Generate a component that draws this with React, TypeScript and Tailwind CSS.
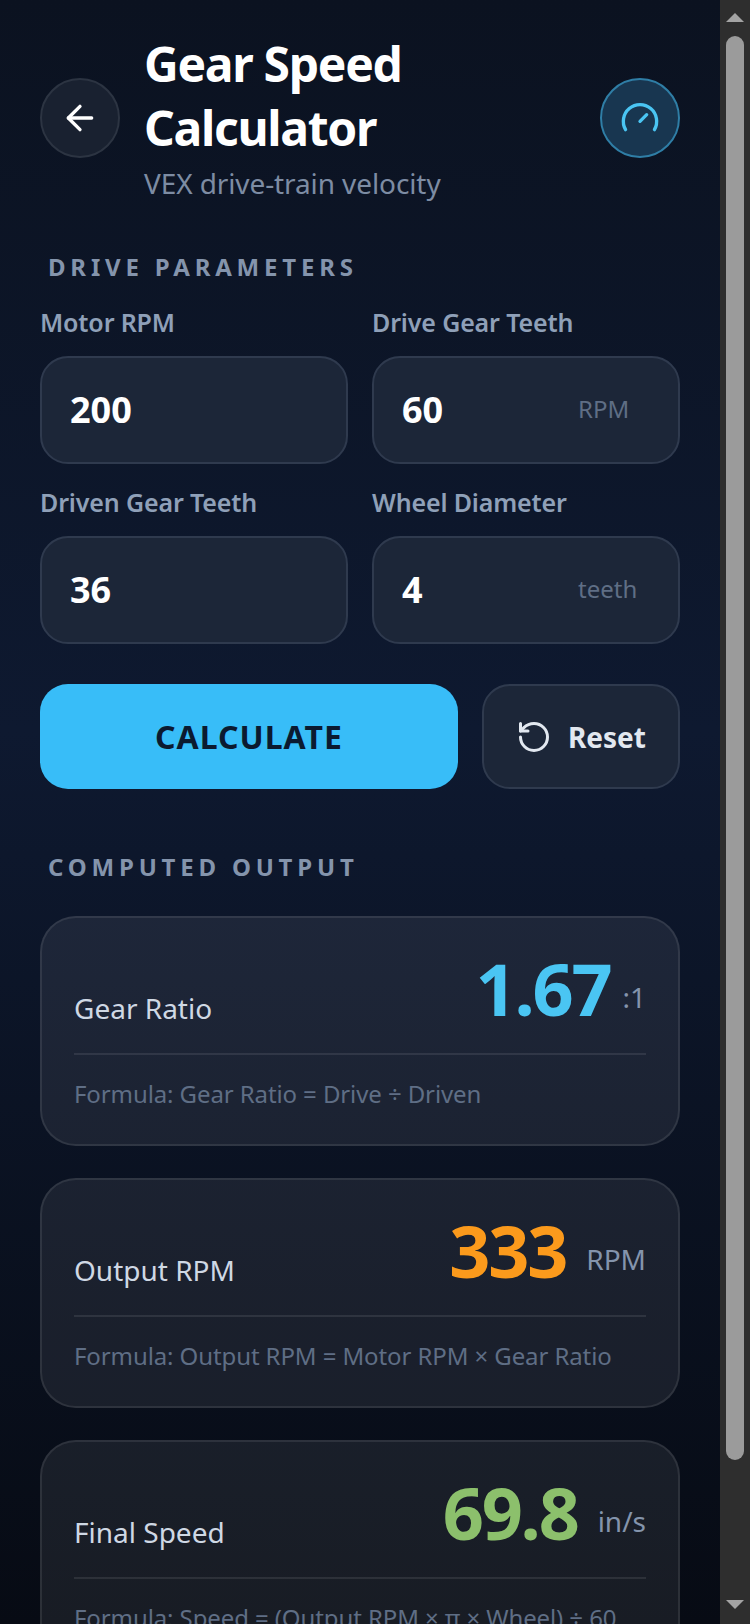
import { ArrowLeft, Gauge, RotateCcw } from "lucide-react";

const Field = ({ label, value, unit }: { label: string; value: string; unit?: string }) => (
  <div className="flex flex-col">
    <label className="text-[25px] leading-[32px] font-semibold tracking-[-0.15px] text-[#8fa0b8] mb-[18px]">{label}</label>
    <div className="h-[108px] rounded-[28px] border-2 border-[#2f3a4e] bg-[#1c2638] flex items-center justify-between pl-[28px] pr-[42px]">
      <span className="text-[36px] font-bold text-white">{value}</span>
      {unit && <span className="w-[58px] -mt-[2px] text-[24px] text-[#5f6e85]">{unit}</span>}
    </div>
  </div>
);

const ResultCard = ({
  label,
  value,
  unit,
  formula,
  valueClass,
  unitClass,
}: {
  label: string;
  value: string;
  unit: string;
  formula: string;
  valueClass: string;
  unitClass: string;
}) => (
  <div className="h-[230px] shrink-0 rounded-[36px] border-2 border-white/[.09] bg-white/[.07] px-[32px] pt-[24px]">
    <div className="h-[113px] flex items-end justify-between border-b-2 border-white/[.09] pb-[26px]">
      <span className="text-[28px] leading-[38px] text-[#cfd8e4]">{label}</span>
      <div className="flex items-center -mb-[4px]">
        <span className={`text-[72px] leading-[86px] font-bold tracking-[-2.2px] ${valueClass}`}>{value}</span>
        <span className={`text-[28px] leading-[38px] pt-[18px] text-[#8494ac] ${unitClass}`}>{unit}</span>
      </div>
    </div>
    <p className="mt-[19px] text-[24px] leading-[40px] tracking-[-0.1px] text-[#5f6e85] whitespace-nowrap">{formula}</p>
  </div>
);

const SectionTitle = ({ children }: { children: string }) => (
  <h2 className="pl-[8px] text-[24px] leading-[32px] font-bold tracking-[4.8px] text-[#8494ac]">{children}</h2>
);

export default function App() {
  return (
    <div className="flex h-[1624px] w-[750px] overflow-hidden font-['Noto_Sans',sans-serif]">
      <main className="w-[720px] h-full overflow-hidden bg-gradient-to-b from-[#0b1220] via-[#0e1930] via-45% to-[#070b14] px-[40px] flex flex-col">
        {/* Header */}
        <header className="flex items-center justify-between pt-[32px]">
          <div className="flex items-center gap-[24px]">
            <button className="w-[80px] h-[80px] rounded-full border-2 border-[#2c3442] bg-[#192130] flex items-center justify-center text-white shrink-0">
              <ArrowLeft className="w-[40px] h-[40px]" strokeWidth={2} />
            </button>
            <div className="w-[330px]">
              <h1 className="text-[48px] leading-[64px] font-bold tracking-[-1.3px] text-white">Gear Speed Calculator</h1>
              <p className="text-[28px] leading-[40px] mt-[3px] tracking-[-0.1px] text-[#7d8ca3]">VEX drive-train velocity</p>
            </div>
          </div>
          <div className="w-[80px] h-[80px] rounded-full border-2 border-[#2f7ea6] bg-[#183650] flex items-center justify-center text-[#4ac5f3]">
            <Gauge className="w-[40px] h-[40px]" strokeWidth={2} />
          </div>
        </header>

        <div className="mt-[48px]">
          <SectionTitle>DRIVE PARAMETERS</SectionTitle>
        </div>

        <div className="grid grid-cols-2 gap-x-[24px] gap-y-[22px] mt-[23px]">
          <Field label="Motor RPM" value="200" />
          <Field label="Drive Gear Teeth" value="60" unit="RPM" />
          <Field label="Driven Gear Teeth" value="36" />
          <Field label="Wheel Diameter" value="4" unit="teeth" />
        </div>

        <div className="flex gap-[24px] mt-[40px]">
          <button className="w-[418px] h-[105px] rounded-[28px] bg-[#38bdf8] text-[#0b1a30] text-[32px] font-bold tracking-[1px]">
            CALCULATE
          </button>
          <button className="flex-1 h-[105px] rounded-[28px] border-2 border-[#2f3a4e] bg-[#1c2638] text-[#e2e8f0] text-[28px] font-bold flex items-center justify-center gap-[16px]">
            <RotateCcw className="w-[36px] h-[36px]" strokeWidth={2} />
            Reset
          </button>
        </div>

        <div className="mt-[62px]">
          <SectionTitle>COMPUTED OUTPUT</SectionTitle>
        </div>

        <div className="flex flex-col gap-[32px] mt-[33px]">
          <ResultCard
            label="Gear Ratio"
            value="1.67"
            unit=":1"
            formula="Formula: Gear Ratio = Drive ÷ Driven"
            valueClass="text-[#4ac5f3]"
            unitClass="ml-[12px]"
          />
          <ResultCard
            label="Output RPM"
            value="333"
            unit="RPM"
            formula="Formula: Output RPM = Motor RPM × Gear Ratio"
            valueClass="text-[#fb9a1c]"
            unitClass="ml-[20px]"
          />
          <ResultCard
            label="Final Speed"
            value="69.8"
            unit="in/s"
            formula="Formula: Speed = (Output RPM × π × Wheel) ÷ 60"
            valueClass="text-[#8cc06c]"
            unitClass="ml-[20px]"
          />
        </div>
      </main>

      {/* Scrollbar */}
      <div className="w-[30px] h-full bg-[#2e2e2e] flex flex-col items-center">
        <svg width="18" height="10" viewBox="0 0 18 10" className="mt-[13px] shrink-0">
          <path d="M9 0 L18 9 L0 9 Z" fill="#a3a3a3" />
        </svg>
        <div className="w-[18px] h-[1424px] mt-[13px] rounded-full bg-[#9b9b9b]" />
        <svg width="18" height="10" viewBox="0 0 18 10" className="mt-[140px] shrink-0">
          <path d="M0 0 L18 0 L9 9 Z" fill="#a3a3a3" />
        </svg>
      </div>
    </div>
  );
}
